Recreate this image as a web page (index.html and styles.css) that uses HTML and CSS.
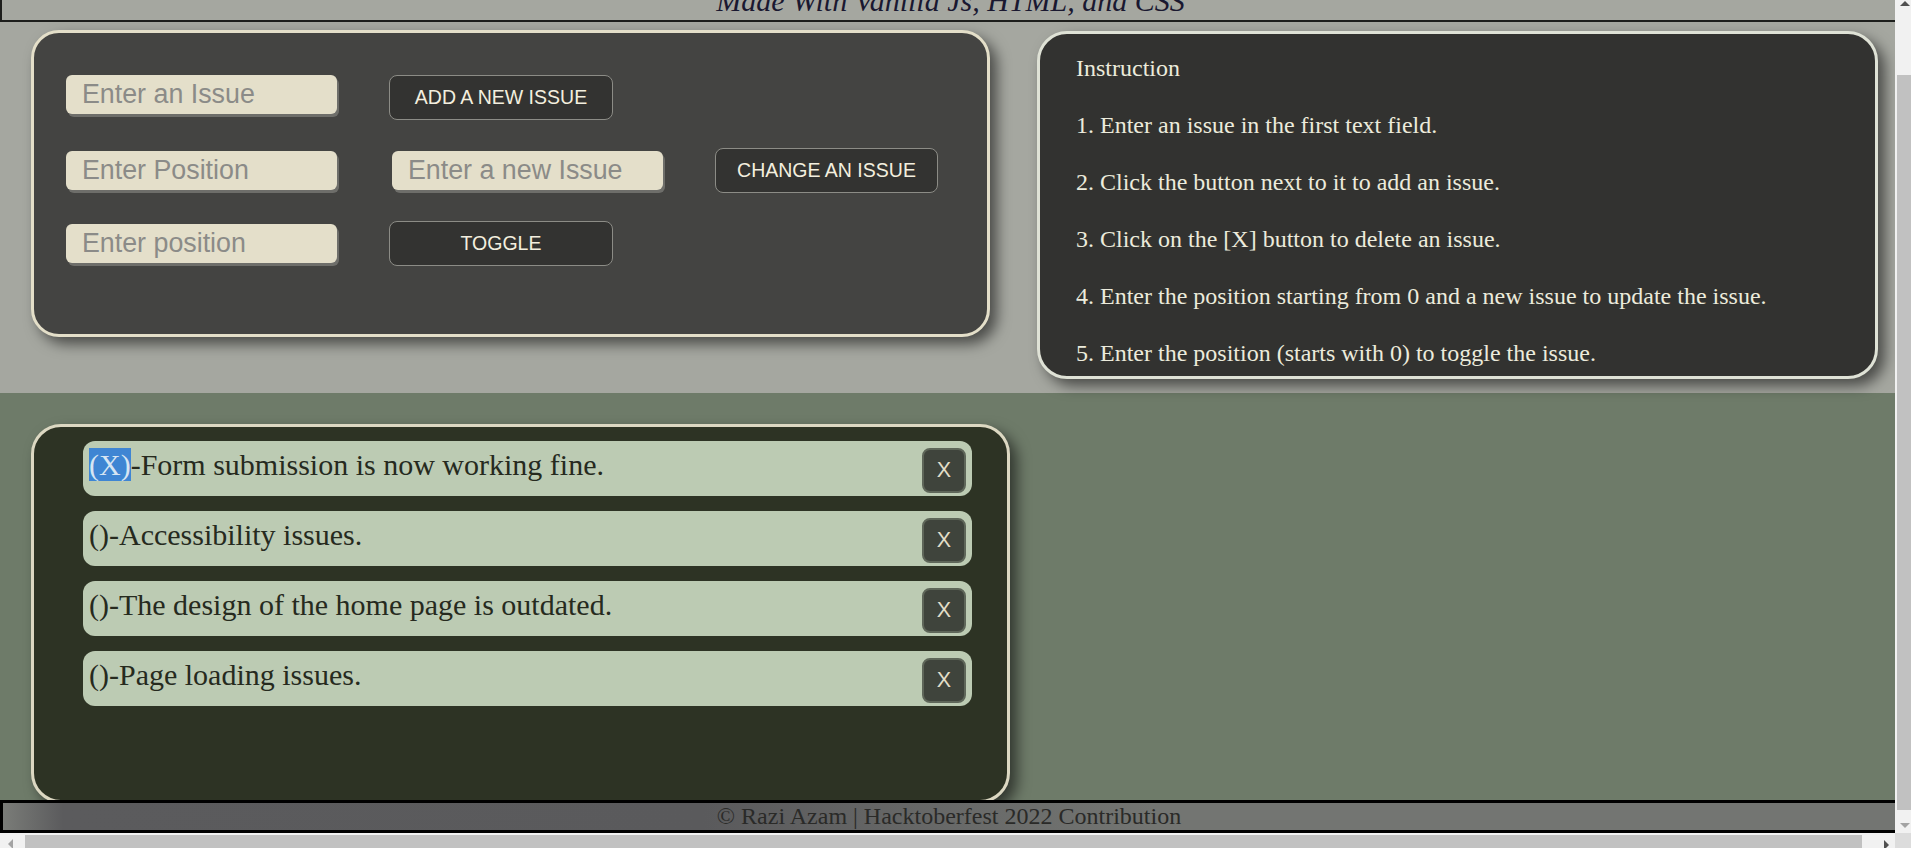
FILE: index.html
```html
<!DOCTYPE html>
<html lang="en">
<head>
<meta charset="utf-8">
<title>Issue Tracker</title>
<link rel="stylesheet" href="styles.css">
</head>
<body>
<div class="screen">
  <div class="viewport">
    <div class="scroller">
      <div class="page">
        <header class="site-header">
          <p class="subtitle">Made With Vanilla Js, HTML, and CSS</p>
        </header>

        <section class="controls">
          <div class="card form-card">
            <div class="form-grid">
              <input class="field field-top" type="text" placeholder="Enter an Issue">
              <button class="btn">ADD A NEW ISSUE</button>
              <span></span>

              <input class="field" type="text" placeholder="Enter Position">
              <input class="field field-right" type="text" placeholder="Enter a new Issue">
              <button class="btn btn-wide">CHANGE AN ISSUE</button>

              <input class="field" type="text" placeholder="Enter position">
              <button class="btn">TOGGLE</button>
              <span></span>
            </div>
          </div>

          <div class="card instructions">
            <p>Instruction</p>
            <p>1. Enter an issue in the first text field.</p>
            <p>2. Click the button next to it to add an issue.</p>
            <p>3. Click on the [X] button to delete an issue.</p>
            <p>4. Enter the position starting from 0 and a new issue to update the issue.</p>
            <p>5. Enter the position (starts with 0) to toggle the issue.</p>
          </div>
        </section>

        <section class="issues-area">
          <div class="card issues-card">
            <ul class="issue-list">
              <li class="issue"><span class="issue-text"><span class="sel">(X)</span>-Form submission is now working fine.</span><button class="del">X</button></li>
              <li class="issue"><span class="issue-text">()-Accessibility issues.</span><button class="del">X</button></li>
              <li class="issue"><span class="issue-text">()-The design of the home page is outdated.</span><button class="del">X</button></li>
              <li class="issue"><span class="issue-text">()-Page loading issues.</span><button class="del">X</button></li>
            </ul>
          </div>
        </section>
      </div>
    </div>
    <footer class="site-footer">© Razi Azam | Hacktoberfest 2022 Contribution</footer>
  </div>

  <div class="vbar">
    <span class="arrow arrow-up"></span>
    <span class="vtrack"><span class="vthumb"></span></span>
    <span class="arrow arrow-down"></span>
  </div>
  <div class="hbar">
    <span class="arrow arrow-left"></span>
    <span class="htrack"><span class="hthumb"></span></span>
    <span class="arrow arrow-right"></span>
  </div>
  <div class="corner"></div>
</div>
</body>
</html>
```

FILE: styles.css
```css
* { box-sizing: border-box; }

html, body {
  margin: 0;
  padding: 0;
  overflow: hidden;
  background: #ffffff;
}

.screen {
  width: 1911px;
  height: 848px;
  display: grid;
  grid-template-columns: 1895px 16px;
  grid-template-rows: 833px 15px;
}

.viewport {
  display: flex;
  flex-direction: column;
  overflow: hidden;
  min-height: 0;
}

.scroller {
  flex: 1;
  overflow: hidden;
  min-height: 0;
}

.page {
  width: 1909px;
  margin-top: -18px;
  font-family: "Liberation Serif", "Times New Roman", serif;
}

/* header */
.site-header {
  background: #a5a7a0;
  border: 2px solid #1d1e1c;
  border-right: none;
  padding: 0 10px 2px 0;
  text-align: center;
}

.subtitle {
  margin: 0;
  font-style: italic;
  font-size: 30px;
  line-height: 34px;
  color: #1a1830;
}

/* controls section */
.controls {
  background: #a5a7a0;
  display: flex;
  align-items: flex-start;
  gap: 47px;
  padding: 8px 0 14px 31px;
}

.card {
  border-radius: 28px;
  box-shadow: 7px 7px 14px rgba(0, 0, 0, 0.55);
}

.form-card {
  width: 959px;
  height: 307px;
  background: #444442;
  border: 3px solid #e4dfc9;
  padding: 42px 0 0 32px;
}

.form-grid {
  display: grid;
  grid-template-columns: 271px 274px 223px;
  grid-auto-rows: 45px;
  column-gap: 52px;
  row-gap: 28px;
  align-items: center;
}

.field {
  width: 271px;
  height: 39px;
  border: none;
  border-radius: 6px;
  background: #e4dfca;
  box-shadow: 2px 3px 0 #6e6e6a;
  padding: 0 0 0 16px;
  font-family: "Liberation Sans", Arial, sans-serif;
  font-size: 26.8px;
  color: #333;
  outline: none;
}

.field::placeholder {
  color: #8b8b88;
}

.field-top {
  align-self: start;
}

.field-right {
  justify-self: end;
}

.btn {
  justify-self: start;
  width: 224px;
  height: 45px;
  background: #333331;
  border: 1px solid #8c8c86;
  border-radius: 8px;
  color: #f3efdf;
  font-family: "Liberation Sans", Arial, sans-serif;
  font-size: 19.5px;
  padding: 0;
}

.btn-wide {
  width: 223px;
}

.instructions {
  width: 841px;
  margin-top: 1px;
  background: #323230;
  border: 3px solid #dfe2d6;
  border-radius: 30px;
  padding: 21px 36px 8px 36px;
  color: #ecebdc;
  font-size: 24px;
}

.instructions p {
  margin: 0 0 29.4px;
  line-height: 27.6px;
}

.instructions p:last-child {
  margin-bottom: 0;
}

/* issues */
.issues-area {
  background: #6e7b69;
  padding: 31px 0 0 31px;
  height: 460px;
}

.issues-card {
  width: 979px;
  height: 379px;
  background: #2d3324;
  border: 3px solid #dcd8c2;
  border-radius: 30px;
  padding: 14px 35px 0 49px;
}

.issue-list {
  list-style: none;
  margin: 0;
  padding: 0;
  display: flex;
  flex-direction: column;
  gap: 15.3px;
}

.issue {
  display: flex;
  justify-content: space-between;
  align-items: flex-start;
  background: #bccbb3;
  border-radius: 12px;
  padding: 7px 6px 3px 6px;
}

.issue-text {
  font-size: 30px;
  line-height: 34px;
  color: #262a1e;
}

.sel {
  background: #3f85d3;
  color: #d7e5f3;
}

.del {
  width: 44px;
  height: 45px;
  background: #3f443c;
  border: 2px solid #5e6659;
  border-radius: 8px;
  color: #e2dec8;
  font-family: "Liberation Sans", Arial, sans-serif;
  font-size: 21.5px;
  padding: 0;
}

/* footer */
.site-footer {
  height: 33px;
  flex: none;
  border: 3px solid #000;
  border-right: none;
  background: linear-gradient(90deg, #7a7c78 0px, #5b5b5d 60px, #5a5a5c 700px, #737572 1150px, #737572 100%);
  text-align: center;
  font-family: "Liberation Serif", "Times New Roman", serif;
  font-size: 24px;
  line-height: 27px;
  color: #2a2a28;
}

/* fake scrollbars */
.vbar {
  background: #f1f1f1;
  display: flex;
  flex-direction: column;
  padding-left: 2px;
}

.vtrack {
  flex: 1;
  display: flex;
  flex-direction: column;
  padding: 60px 0 8px;
}

.vthumb {
  flex: 1;
  background: #c1c1c1;
}

.hbar {
  background: #f1f1f1;
  display: flex;
  padding-top: 2px;
}

.htrack {
  flex: 1;
  display: flex;
  padding: 0 18px 0 10px;
}

.hthumb {
  flex: 1;
  background: #c1c1c1;
}

.corner {
  background: #dcdcdc;
}

.arrow {
  flex: none;
  width: 14px;
  height: 15px;
  position: relative;
}

.arrow::after {
  content: "";
  position: absolute;
  width: 0;
  height: 0;
  border: 4px solid transparent;
}

.arrow-up::after {
  left: 3px;
  top: 1px;
  border-bottom: 5px solid #505050;
  border-left-width: 5px;
  border-right-width: 5px;
  border-top-width: 0;
}

.arrow-down::after {
  left: 3px;
  top: 5px;
  border-top: 5px solid #a3a3a3;
  border-left-width: 5px;
  border-right-width: 5px;
  border-bottom-width: 0;
}

.arrow-left {
  width: 15px;
  height: 13px;
}

.arrow-left::after {
  left: 8px;
  top: 4px;
  border-right: 5px solid #a3a3a3;
  border-top-width: 5px;
  border-bottom-width: 5px;
  border-left-width: 0;
}

.arrow-right {
  width: 15px;
  height: 13px;
}

.arrow-right::after {
  left: 4px;
  top: 5px;
  border-left: 5px solid #505050;
  border-top-width: 5px;
  border-bottom-width: 5px;
  border-right-width: 0;
}
```
